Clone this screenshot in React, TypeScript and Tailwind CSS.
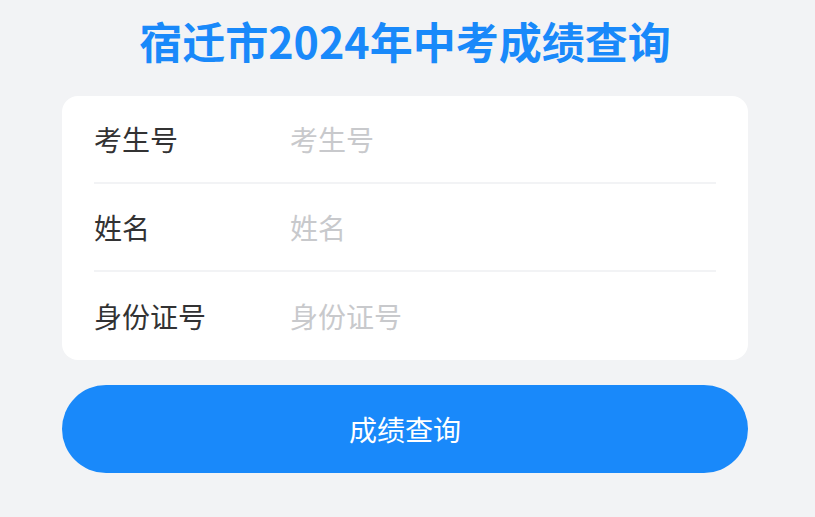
export default function App() {
  const fields = [
    { label: '考生号', placeholder: '考生号' },
    { label: '姓名', placeholder: '姓名' },
    { label: '身份证号', placeholder: '身份证号' },
  ];

  return (
    <div
      className="min-h-[517px] w-full bg-[#f2f3f5] pt-[13px] pr-[67px] pb-10 pl-[62px]"
      style={{ fontFamily: '"Noto Sans CJK SC", "Noto Sans", sans-serif' }}
    >
      <h1 className="text-center text-[43px] leading-[54px] font-bold text-[#1989fa]">
        宿迁市2024年中考成绩查询
      </h1>

      <div className="mt-[29px] overflow-hidden rounded-[16px] bg-white">
        {fields.map((f, i) => (
          <div key={f.label} className="px-[32px]">
            <div
              className={
                'flex h-[88px] items-center ' +
                (i < fields.length - 1 ? 'border-b-2 border-[#f2f3f5]' : '')
              }
            >
              <label className="w-[196px] shrink-0 text-[28px] text-[#323233]">{f.label}</label>
              <input
                type="text"
                placeholder={f.placeholder}
                className="min-w-0 flex-1 bg-transparent text-[28px] text-[#323233] outline-none placeholder:text-[#c8c9cc]"
              />
            </div>
          </div>
        ))}
      </div>

      <button className="mt-[25px] flex h-[88px] w-full items-center justify-center rounded-full bg-[#1989fa] text-[28px] text-white">
        成绩查询
      </button>
    </div>
  );
}
